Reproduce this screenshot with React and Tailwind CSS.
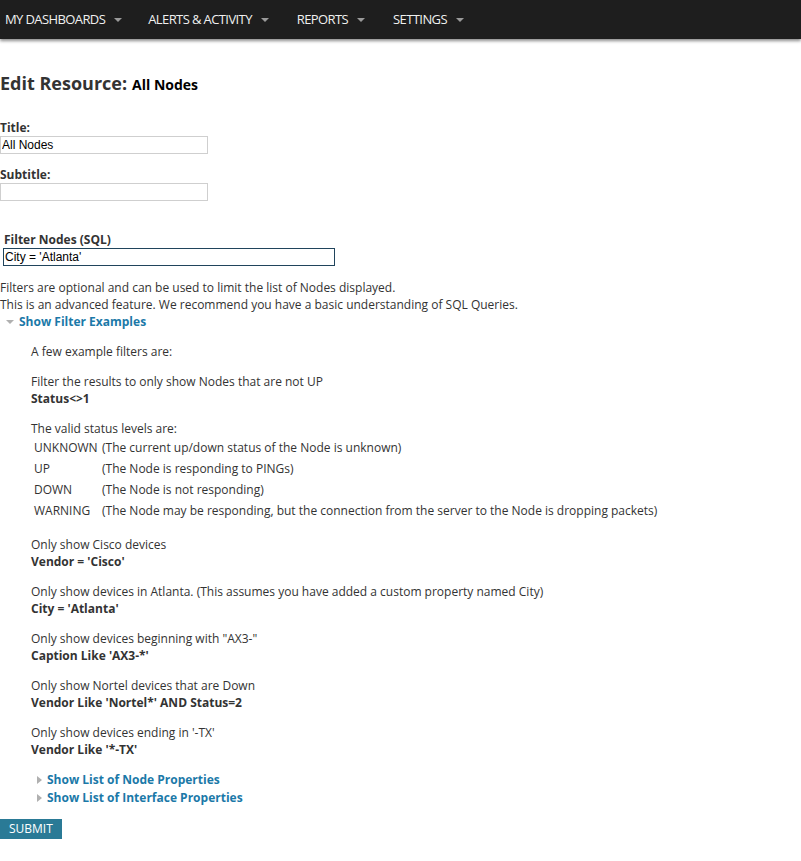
const Caret = () => (
  <span className="ml-[9px] inline-block h-0 w-0 border-x-[4px] border-t-[4px] border-x-transparent border-t-[#9a9a9a] align-middle" />
);

const navItems = ['MY DASHBOARDS', 'ALERTS & ACTIVITY', 'REPORTS', 'SETTINGS'];

const statusLevels = [
  ['UNKNOWN', '(The current up/down status of the Node is unknown)'],
  ['UP', '(The Node is responding to PINGs)'],
  ['DOWN', '(The Node is not responding)'],
  ['WARNING', '(The Node may be responding, but the connection from the server to the Node is dropping packets)'],
];

const examples = [
  ['Only show Cisco devices', "Vendor = 'Cisco'"],
  ['Only show devices in Atlanta. (This assumes you have added a custom property named City)', "City = 'Atlanta'"],
  ['Only show devices beginning with "AX3-"', "Caption Like 'AX3-*'"],
  ['Only show Nortel devices that are Down', "Vendor Like 'Nortel*' AND Status=2"],
  ["Only show devices ending in '-TX'", "Vendor Like '*-TX'"],
];

const App = () => {
  return (
    <div className="min-h-[861px] bg-white font-['Open_Sans',sans-serif] text-[12px] text-[#333]">
      <div className="flex h-[39px] items-center bg-[#1e1e1e] shadow-[0_2px_3px_rgba(0,0,0,0.45)]">
        {navItems.map((item, i) => (
          <div
            key={item}
            className={`flex items-center text-[13px] tracking-[-0.6px] text-[#f0f0f0] ${
              i === 0 ? 'ml-[5px] mr-[26px]' : i === 1 ? 'mr-[28px]' : i === 2 ? 'mr-[28px]' : ''
            }`}
          >
            {item}
            <Caret />
          </div>
        ))}
      </div>

      <div className="pt-[32px]">
        <h1 className="flex items-baseline text-[18px] font-bold leading-[24px] text-[#333]">
          Edit Resource:
          <span className="ml-[5px] text-[14px] font-bold text-black">All Nodes</span>
        </h1>

        <div className="mt-[23px] text-[12px] font-bold leading-[16px]">Title:</div>
        <input
          defaultValue="All Nodes"
          className="block h-[18px] w-[208px] border border-[#cfcfcf] px-[1px] font-['Liberation_Sans',sans-serif] text-[12px] text-black outline-none"
        />

        <div className="mt-[13px] text-[12px] font-bold leading-[16px]">Subtitle:</div>
        <input className="block h-[18px] w-[208px] border border-[#cfcfcf] px-[1px] text-[12px] outline-none" />

        <div className="ml-[4px] mt-[31px] text-[12px] font-bold leading-[16px]">Filter Nodes (SQL)</div>
        <input
          defaultValue="City = 'Atlanta'"
          className="ml-[3px] block h-[18px] w-[332px] border border-[#20445c] px-[1px] font-['Liberation_Sans',sans-serif] text-[12px] text-black outline-none"
        />

        <div className="mt-[13px] leading-[17px]">
          <div>Filters are optional and can be used to limit the list of Nodes displayed.</div>
          <div>This is an advanced feature. We recommend you have a basic understanding of SQL Queries.</div>
        </div>
        <div className="ml-[6px] flex items-center font-bold leading-[18px] text-[#1b79a8]">
          <span className="mr-[5px] inline-block h-0 w-0 border-x-[4px] border-t-[4px] border-x-transparent border-t-[#b0b0b0]" />
          Show Filter Examples
        </div>

        <div className="ml-[31px] mt-[12px] leading-[17px]">
          <div>A few example filters are:</div>

          <div className="mt-[13px]">Filter the results to only show Nodes that are not UP</div>
          <div className="font-bold">Status&lt;&gt;1</div>

          <div className="mt-[13px]">The valid status levels are:</div>
          <div className="ml-[3px]">
            {statusLevels.map(([k, v]) => (
              <div key={k} className="flex h-[21px] items-center">
                <span className="w-[68px]">{k}</span>
                <span>{v}</span>
              </div>
            ))}
          </div>

          {examples.map(([t, q], i) => (
            <div key={q} className={i === 0 ? 'mt-[15px]' : 'mt-[13px]'}>
              <div>{t}</div>
              <div className="font-bold">{q}</div>
            </div>
          ))}

          <div className="ml-[6px] mt-[13px] leading-[18px]">
            {['Show List of Node Properties', 'Show List of Interface Properties'].map((l) => (
              <div key={l} className="flex items-center font-bold text-[#1b79a8]">
                <span className="mr-[5px] inline-block h-0 w-0 border-y-[4px] border-l-[5px] border-y-transparent border-l-[#b0b0b0]" />
                {l}
              </div>
            ))}
          </div>
        </div>

        <button className="mt-[12px] h-[20px] bg-[#2a7a96] px-[9px] text-[12px] text-white">SUBMIT</button>
      </div>
    </div>
  );
};

export default App;
